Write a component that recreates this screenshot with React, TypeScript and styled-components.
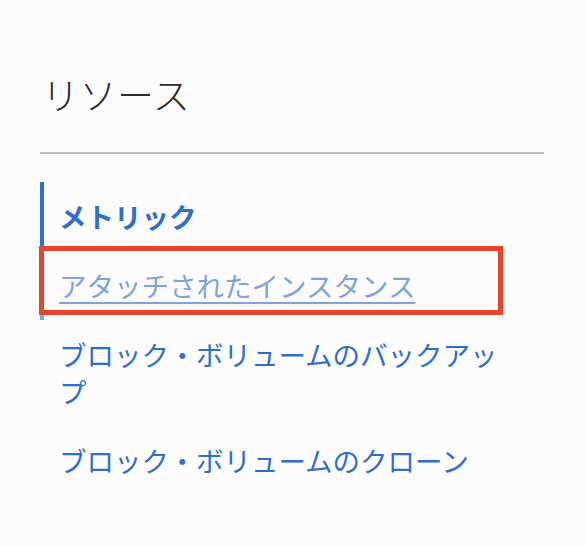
import React from "react";
import styled, { createGlobalStyle } from "styled-components";

const GlobalStyle = createGlobalStyle`
  html, body {
    margin: 0;
    padding: 0;
    background: #fcfcfd;
  }
  body {
    font-family: "Noto Sans CJK JP", "Noto Sans", sans-serif;
  }
`;

const Page = styled.div`
  padding: 73px 42px 40px 40px;
`;

const Title = styled.h1`
  margin: 0 0 36px 2px;
  font-size: 37px;
  line-height: 43px;
  font-weight: 300;
  color: #2b2b2b;
  letter-spacing: 0.5px;
`;

const Divider = styled.hr`
  margin: 0 0 28px 0;
  border: none;
  height: 2px;
  background: #b9bcc0;
`;

const Nav = styled.nav`
  display: flex;
  flex-direction: column;
`;

const Item = styled.a<{ $bar?: "dark" | "light"; $active?: boolean; $dim?: boolean }>`
  position: relative;
  display: block;
  padding: 16px 30px 16px 15px;
  border-left: 4px solid
    ${(p) => (p.$bar === "dark" ? "#2f6fcc" : p.$bar === "light" ? "#82a6de" : "transparent")};
  font-size: 27.5px;
  line-height: 37px;
  font-weight: ${(p) => (p.$active ? 700 : 400)};
  color: ${(p) => (p.$dim ? "#7fa3dc" : "#2f6fcc")};
  text-decoration: ${(p) => (p.$dim ? "underline" : "none")};
  text-decoration-thickness: 2px;
  text-underline-offset: 5px;
  cursor: pointer;
`;

const Highlight = styled.span`
  position: absolute;
  left: -5px;
  top: -5px;
  width: 464px;
  height: 69px;
  box-sizing: border-box;
  border: 5px solid #e8442b;
  pointer-events: none;
`;

export default function App() {
  return (
    <>
      <GlobalStyle />
      <Page>
        <Title>リソース</Title>
        <Divider />
        <Nav>
          <Item $bar="dark" $active>
            メトリック
          </Item>
          <Item $bar="light" $dim>
            アタッチされたインスタンス
            <Highlight />
          </Item>
          <Item>ブロック・ボリュームのバックアップ</Item>
          <Item>ブロック・ボリュームのクローン</Item>
        </Nav>
      </Page>
    </>
  );
}
